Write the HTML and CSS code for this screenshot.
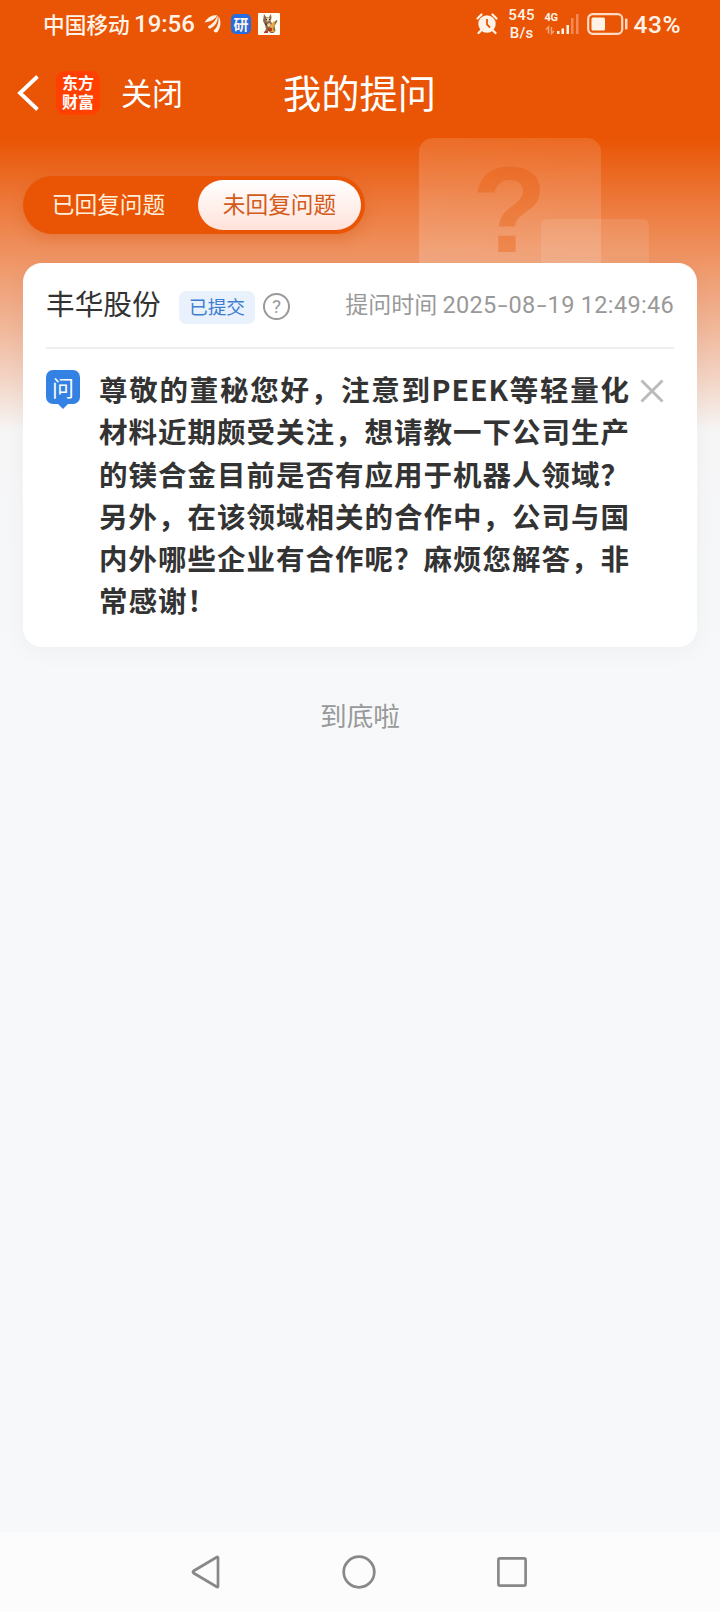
FILE: index.html
```
<!DOCTYPE html>
<html lang="zh-CN">
<head>
  <meta charset="UTF-8" />
  <meta name="viewport" content="width=device-width, initial-scale=1.0"/>
  <title>我的提问</title>
  <link rel="stylesheet" href="styles.css">
</head>
<body>
  <div class="page">
    <div class="hero-art">
      <div class="square big"><span>?</span></div>
      <div class="square small"></div>
    </div>

    <div class="status-bar">
      <span class="carrier">中国移动</span>
      <span class="clock">19:56</span>
      <svg class="wing" width="18" height="20" viewBox="0 0 18 20" fill="#fff3e8">
        <path d="M0.500 8.500C3 4 7 1 13 1c-1 4-6 6.500-12.500 7.500z"/>
        <path d="M4 12.500C9 10 12 6 13.500 1.500 14.500 7 12 11.500 6.500 14.500 5 14.800 4 14 4 12.500z"/>
        <path d="M9.500 16.500c4-3 5.500-8 5-14.500 3 5 2.500 11-1 16-1.500 1-3.500 0.500-4-1.500z"/>
      </svg>
      <div class="app-icon">研</div>
      <svg class="mascot" width="22" height="22" viewBox="0 0 22 22">
        <rect width="22" height="22" rx="1" fill="#fffdf2"/>
        <path d="M6 1l2 3h3l2-3 0.500 4-1 3 2 3 4-4 1 1-3 5 1 5-2 2h-3l-2-2-2 2H6l2-4-1-4-2-4z" fill="#8a6a4c"/>
        <path d="M8 5l3-1 1 3-3 2zM9 11l3-1 1 3-3 1z" fill="#ecd0a8"/>
        <path d="M12 13l4-5 1 3-2 5 2 3h-4z" fill="#e9a83c"/>
        <path d="M10 15h4v3h-4zM7 18h3v2H6z" fill="#b63a1d"/>
        <path d="M8 6h1v1H8zM11 6h1v1h-1zM7 10l2 1-1 2z" fill="#35241c"/>
      </svg>
      <div class="status-right">
        <svg class="alarm" width="22" height="22" viewBox="0 0 22 22">
          <circle cx="11" cy="11" r="8.700" fill="#fff3e8"/>
          <path d="M1.500 5.500l4-4M20.500 5.500l-4-4M5 17.500L2.500 20M17 17.500l2.500 2.500" stroke="#fff3e8" stroke-width="2.200" stroke-linecap="round"/>
          <path d="M11 6v5.500l3 3" fill="none" stroke="#e95504" stroke-width="1.800"/>
        </svg>
        <div class="speed"><span>545</span><span>B/s</span></div>
        <div class="signal">
          <span class="net">4G</span>
          <svg width="34" height="22" viewBox="0 0 34 22">
            <path d="M1 16.500l2.500-2.500v6.500M6.500 14v6.500L9 18" fill="none" stroke="#f5a47c" stroke-width="1.500"/>
            <path d="M12 18h2.500v3H12zM16.500 15.500H19V21h-2.500zM21.500 12H24v9h-2.500z" fill="#fff3e8"/>
            <path d="M26 5h2.500v16H26zM31 1h2.500v20H31z" fill="#f38a58"/>
          </svg>
        </div>
        <svg class="battery" width="41" height="22" viewBox="0 0 41 22">
          <rect x="1.200" y="1.200" width="34" height="19.600" rx="4.500" fill="none" stroke="#ffd9c2" stroke-width="2.200"/>
          <rect x="4.500" y="4.500" width="13.500" height="13" rx="1.500" fill="#fff3e8"/>
          <rect x="38" y="5.500" width="2.500" height="11" rx="1" fill="#ffd9c2"/>
        </svg>
        <span class="percent">43%</span>
      </div>
    </div>

    <div class="nav-bar">
      <svg class="back" width="22" height="36" viewBox="0 0 22 36">
        <path d="M20.500 1.500L3 18l17.500 16.500" fill="none" stroke="#fff" stroke-width="3.800"/>
      </svg>
      <div class="logo">东方<br>财富</div>
      <span class="close">关闭</span>
      <h1>我的提问</h1>
    </div>

    <div class="tabs">
      <div class="tab">已回复问题</div>
      <div class="tab active">未回复问题</div>
    </div>

    <div class="card">
      <div class="card-head">
        <span class="stock">丰华股份</span>
        <span class="state">已提交</span>
        <span class="help">?</span>
        <span class="time">提问时间 <span class="digits">2025<i>-</i>08<i>-</i>19 12:49:46</span></span>
      </div>
      <div class="question">
        <div class="ask">问</div>
        <p>尊敬的董秘您好，注意到PEEK等轻量化材料近期颇受关注，想请教一下公司生产的镁合金目前是否有应用于机器人领域？另外，在该领域相关的合作中，公司与国内外哪些企业有合作呢？麻烦您解答，非常感谢！</p>
        <svg class="delete" width="24" height="24" viewBox="0 0 24 24">
          <path d="M1.500 1.500l21 21M22.500 1.500l-21 21" stroke="#bbb" stroke-width="3"/>
        </svg>
      </div>
    </div>

    <div class="end">到底啦</div>

    <div class="system-nav">
      <svg width="30" height="34" viewBox="0 0 30 34">
        <path d="M27 2.500v29a.8.8 0 0 1-1 .5L2.500 18a1.200 1.200 0 0 1 0-2L26 2a.8.8 0 0 1 1 .5z" fill="none" stroke="#888" stroke-width="2.700"/>
      </svg>
      <svg width="34" height="34" viewBox="0 0 34 34">
        <circle cx="17" cy="17" r="15.300" fill="none" stroke="#888" stroke-width="2.700"/>
      </svg>
      <svg width="30" height="30" viewBox="0 0 30 30">
        <rect x="1.400" y="1.400" width="27.200" height="27.200" rx="1.500" fill="none" stroke="#888" stroke-width="2.700"/>
      </svg>
    </div>
  </div>
</body>
</html>
```
FILE: styles.css
```
* {
  box-sizing: border-box;
}
body {
  margin: 0;
  font-family: "Noto Sans CJK SC", sans-serif;
  color: #333;
}
svg {
  display: block;
  flex: none;
}
.page {
  position: relative;
  display: flex;
  flex-direction: column;
  width: 720px;
  height: 1612px;
  overflow: hidden;
  background: linear-gradient(#e95504 0, #e95504 138px, #ec7535 196px, #ef9565 260px, #f1b89b 330px, #f3d5c6 380px, #f6f6f7 432px, #f6f8fa 700px);
}

/* decoration behind the card */
.hero-art {
  position: absolute;
  top: 0;
  left: 0;
}
.square {
  position: absolute;
}
.square.big {
  left: 419px;
  top: 138px;
  width: 182px;
  height: 182px;
  border-radius: 14px;
  background: linear-gradient(200deg, rgba(255,255,255,0.12), rgba(255,255,255,0.18));
}
.square.big span {
  position: absolute;
  left: 53px;
  top: 10px;
  font: bold 123px/1 "Liberation Sans", sans-serif;
  color: rgba(233,85,4,0.34);
}
.square.small {
  left: 541px;
  top: 219px;
  width: 108px;
  height: 108px;
  border-radius: 6px;
  background: rgba(255,255,255,0.1);
}

.status-bar {
  display: flex;
  align-items: center;
  height: 48px;
  padding: 0 39px 0 43px;
  color: #fff3e8;
  white-space: nowrap;
}
.carrier {
  width: 91px;
  margin-top: -2px;
  font-size: 21.700px;
  font-weight: 500;
}
.clock {
  width: 70px;
  font: 500 24px "Roboto", sans-serif;
}
.app-icon {
  width: 20px;
  height: 20px;
  margin: 0 7px 0 9px;
  border-radius: 5px;
  background: #246ce0;
  font-size: 15px;
  font-weight: 700;
  line-height: 19px;
  text-align: center;
}
.status-right {
  display: flex;
  align-items: center;
  margin-left: auto;
}
.speed {
  display: flex;
  flex-direction: column;
  width: 28px;
  margin: 0 9px 0 10px;
  font: 500 15px/18px "Roboto", sans-serif;
  letter-spacing: 0.300px;
  text-align: center;
}
.signal {
  position: relative;
  margin-right: 8px;
}
.net {
  position: absolute;
  left: 0;
  top: -1px;
  font: bold 11px/12px "Roboto", sans-serif;
  letter-spacing: -0.500px;
}
.percent {
  margin-left: 6px;
  font: 500 24.500px "Roboto", sans-serif;
  letter-spacing: 0.500px;
}

.nav-bar {
  position: relative;
  display: flex;
  align-items: center;
  height: 90px;
  padding: 0 0 0 17px;
  color: #fff;
}
.logo {
  width: 44px;
  height: 44px;
  margin: 0 21px 0 17px;
  padding-top: 2px;
  border-radius: 9px;
  background: #ff4000;
  font-size: 16px;
  font-weight: 700;
  line-height: 19px;
  text-align: center;
}
.close {
  margin-top: -2px;
  font-size: 31px;
  line-height: 40px;
}
h1 {
  position: absolute;
  left: 0;
  right: 1px;
  margin: -3px 0 0;
  font-size: 38.300px;
  font-weight: 400;
  line-height: 56px;
  text-align: center;
}

.tabs {
  position: relative;
  display: flex;
  align-self: flex-start;
  width: 342px;
  height: 58px;
  margin: 38px 0 0 23px;
  padding: 4px;
  border-radius: 29px;
  background: #e95504;
  box-shadow: 0 5px 14px rgba(200,70,0,0.25);
}
.tab {
  width: 171px;
  height: 50px;
  padding-right: 8px;
  border-radius: 25px;
  color: #ffefdc;
  font-size: 22.700px;
  line-height: 48px;
  text-align: center;
  white-space: nowrap;
}
.tab.active {
  width: 163px;
  padding: 0;
  background: linear-gradient(#fff, #ffe2da);
  color: #d35b1c;
}

.card {
  position: relative;
  width: 674px;
  height: 384px;
  margin: 29px 0 0 23px;
  padding: 0 23px;
  border-radius: 19px;
  background: #fff;
  box-shadow: 0 4px 24px rgba(0,0,0,0.04);
}
.card-head {
  display: flex;
  align-items: center;
  height: 86px;
  border-bottom: 2px solid #eee;
  white-space: nowrap;
}
.stock {
  width: 133px;
  margin-top: -5px;
  font-size: 28.700px;
}
.state {
  width: 76px;
  height: 33px;
  margin-top: 4px;
  border-radius: 7px;
  background: #e9f2fc;
  color: #3d7dd0;
  font-size: 18.700px;
  line-height: 29px;
  text-align: center;
}
.help {
  width: 27px;
  height: 27px;
  margin: 3px 0 0 8px;
  border: 2px solid #999;
  border-radius: 50%;
  color: #999;
  font: 19px/23px "Roboto", sans-serif;
  text-align: center;
}
.time {
  margin: -4px 0 0 auto;
  color: #999;
  font-size: 23px;
}
.digits {
  font-family: "Roboto", sans-serif;
  font-size: 23.500px;
  letter-spacing: 0.320px;
}
/* wider dash between date parts */
.digits i {
  display: inline-block;
  width: 12px;
  font-style: normal;
  text-align: center;
  transform: scaleX(1.500);
}
.question {
  display: flex;
  align-items: flex-start;
}
.ask {
  position: relative;
  flex: none;
  width: 34px;
  height: 34px;
  margin-top: 21px;
  border-radius: 7px;
  background: #3381e3;
  color: #fff;
  font-size: 22px;
  line-height: 33px;
  text-align: center;
}
.ask::after {
  content: "";
  position: absolute;
  left: 11px;
  top: 33px;
  border: 6px solid transparent;
  border-top-color: #3381e3;
  border-bottom: 0;
}
.question p {
  width: 531px;
  margin: 19px 0 0 19px;
  font-size: 28.500px;
  font-weight: 700;
  line-height: 42.300px;
  letter-spacing: 0.950px;
  text-align: justify;
}
.delete {
  margin: 30px 0 0 10px;
}

.end {
  margin-top: 48px;
  color: #999;
  font-size: 26.700px;
  line-height: 40px;
  text-align: center;
}

.system-nav {
  display: flex;
  align-items: center;
  justify-content: center;
  gap: 121px;
  height: 80px;
  margin-top: auto;
  padding-right: 2px;
  background: #fcfcfc;
}
```
